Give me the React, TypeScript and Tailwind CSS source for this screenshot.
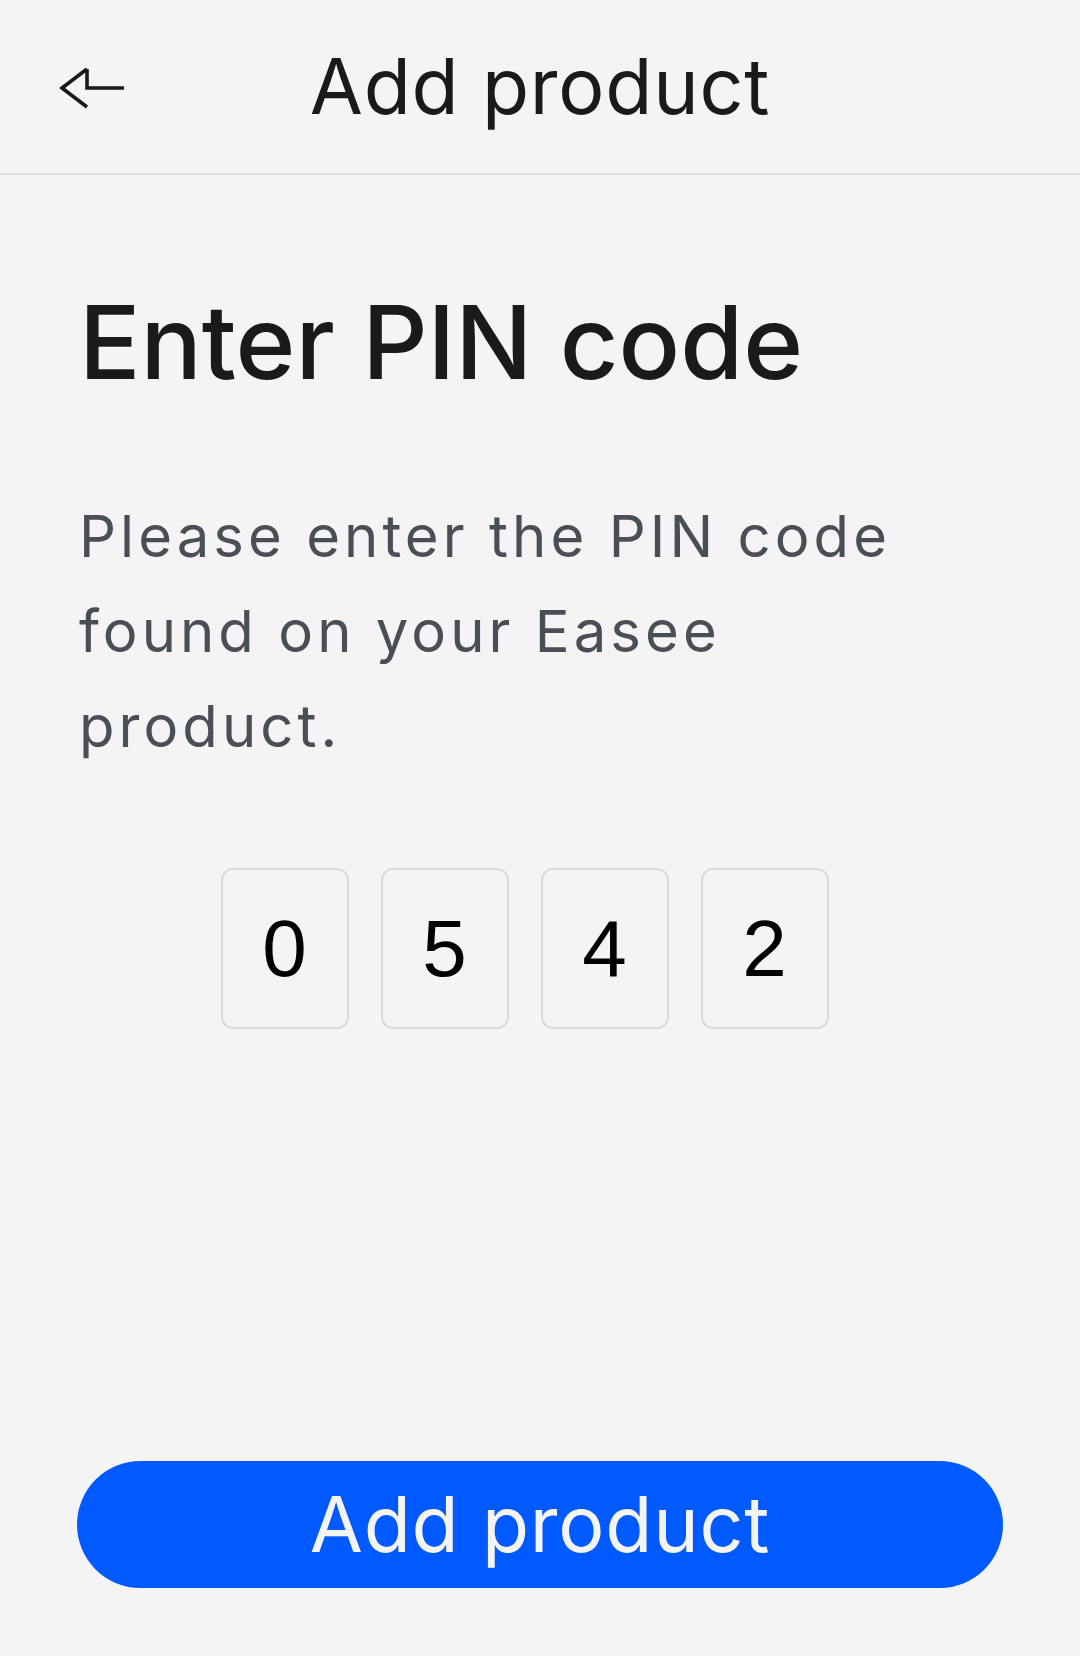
const PIN = ['0', '5', '4', '2']

function BackArrow(): JSX.Element {
  return (
    <svg width="70" height="50" viewBox="0 0 70 50" fill="none" stroke="#1a1a1a" strokeWidth="3.6">
      <path d="M32 6 L7 25 L32 44" strokeLinejoin="miter" />
      <path d="M32 6 V25 H69" />
    </svg>
  )
}

export default function App(): JSX.Element {
  return (
    <div
      className="min-h-screen flex flex-col bg-[#f4f4f4]"
      style={{ fontFamily: 'Inter, "Noto Sans", sans-serif' }}
    >
      {/* Header */}
      <header className="h-[175px] grid grid-cols-[1fr_auto_1fr] items-center border-b-2 border-[#dcdcdc]">
        <div className="pl-[55px] pt-[2px]">
          <BackArrow />
        </div>
        <h2 className="text-[77px] leading-none tracking-[0.01em] text-[#1a1a1a] font-normal">Add product</h2>
        <div />
      </header>

      {/* Content */}
      <main className="px-[79px] pt-[116px]">
        <h1 className="text-[102px] leading-none font-medium text-[#1a1a1a]">Enter PIN code</h1>
        <p className="mt-[96px] text-[58px] leading-[95px] tracking-[0.07em] text-[#4a4e57]">
          Please enter the PIN code
          <br />
          found on your Easee
          <br />
          product.
        </p>

        <div className="mt-[94px] flex justify-center gap-[32px] pr-[31px]">
          {PIN.map((digit, i) => (
            <div
              key={i}
              className="w-[128px] h-[161px] flex items-center justify-center rounded-[12px] border-2 border-[#dadada]"
            >
              <span
                className="text-[80px] leading-none text-black"
                style={{ fontFamily: '"Liberation Sans", Arial, sans-serif' }}
              >
                {digit}
              </span>
            </div>
          ))}
        </div>
      </main>

      {/* Footer button */}
      <div className="mt-auto px-[77px] pb-[68px]">
        <button className="w-full h-[127px] rounded-full bg-[#005aff] text-[#f4f4f4] text-[77px] leading-none tracking-[0.01em]">
          Add product
        </button>
      </div>
    </div>
  )
}
